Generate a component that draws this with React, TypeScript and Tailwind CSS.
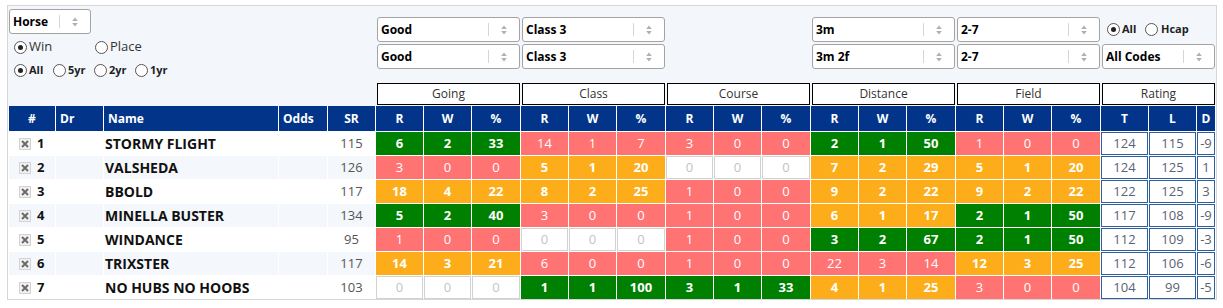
import React from "react";

type Tone = "g" | "r" | "o" | "z";
type Stat = [number, number, number, Tone];

type Runner = {
  no: number;
  name: string;
  sr: number;
  stats: Stat[];
  t: number;
  l: number;
  d: number;
};

const TONE: Record<Tone, string> = {
  g: "bg-[#008000] text-white font-bold",
  r: "bg-[#ff7373] text-white",
  o: "bg-[#fdad19] text-white font-bold",
  z: "bg-white text-[#c4c4c4] border border-[#d2d2d2]",
};

const RUNNERS: Runner[] = [
  {
    no: 1,
    name: "STORMY FLIGHT",
    sr: 115,
    stats: [
      [6, 2, 33, "g"],
      [14, 1, 7, "r"],
      [3, 0, 0, "r"],
      [2, 1, 50, "g"],
      [1, 0, 0, "r"],
    ],
    t: 124,
    l: 115,
    d: -9,
  },
  {
    no: 2,
    name: "VALSHEDA",
    sr: 126,
    stats: [
      [3, 0, 0, "r"],
      [5, 1, 20, "o"],
      [0, 0, 0, "z"],
      [7, 2, 29, "o"],
      [5, 1, 20, "o"],
    ],
    t: 124,
    l: 125,
    d: 1,
  },
  {
    no: 3,
    name: "BBOLD",
    sr: 117,
    stats: [
      [18, 4, 22, "o"],
      [8, 2, 25, "o"],
      [1, 0, 0, "r"],
      [9, 2, 22, "o"],
      [9, 2, 22, "o"],
    ],
    t: 122,
    l: 125,
    d: 3,
  },
  {
    no: 4,
    name: "MINELLA BUSTER",
    sr: 134,
    stats: [
      [5, 2, 40, "g"],
      [3, 0, 0, "r"],
      [1, 0, 0, "r"],
      [6, 1, 17, "o"],
      [2, 1, 50, "g"],
    ],
    t: 117,
    l: 108,
    d: -9,
  },
  {
    no: 5,
    name: "WINDANCE",
    sr: 95,
    stats: [
      [1, 0, 0, "r"],
      [0, 0, 0, "z"],
      [1, 0, 0, "r"],
      [3, 2, 67, "g"],
      [2, 1, 50, "g"],
    ],
    t: 112,
    l: 109,
    d: -3,
  },
  {
    no: 6,
    name: "TRIXSTER",
    sr: 117,
    stats: [
      [14, 3, 21, "o"],
      [6, 0, 0, "r"],
      [1, 0, 0, "r"],
      [22, 3, 14, "r"],
      [12, 3, 25, "o"],
    ],
    t: 112,
    l: 106,
    d: -6,
  },
  {
    no: 7,
    name: "NO HUBS NO HOOBS",
    sr: 103,
    stats: [
      [0, 0, 0, "z"],
      [1, 1, 100, "g"],
      [3, 1, 33, "g"],
      [4, 1, 25, "o"],
      [3, 0, 0, "r"],
    ],
    t: 104,
    l: 99,
    d: -5,
  },
];

const GROUPS = ["Going", "Class", "Course", "Distance", "Field"];

function Select({ value, className = "" }: { value: string; className?: string }) {
  return (
    <div
      className={`flex h-[25px] items-center rounded-[3px] border border-[#a3a3a3] bg-white pl-[3px] text-[12px] font-bold text-black ${className}`}
    >
      <span className="flex-1 truncate">{value}</span>
      <span className="h-[13px] w-px bg-[#d6d6d6]" />
      <svg className="mx-[12px]" width="6" height="10" viewBox="0 0 6 10">
        <path d="M3 0.5L5.8 4H0.2Z M3 9.5L5.8 6H0.2Z" fill="#b0b0b0" />
      </svg>
    </div>
  );
}

function Radio({ checked = false }: { checked?: boolean }) {
  return (
    <span className="flex h-[13px] w-[13px] shrink-0 items-center justify-center rounded-full border border-[#555] bg-white">
      {checked && <span className="h-[5px] w-[5px] rounded-full bg-[#222]" />}
    </span>
  );
}

function RemoveBox() {
  return (
    <span className="flex h-[12px] w-[12px] items-center justify-center border border-[#d3d3d3] bg-[#f1f1f1]">
      <svg width="8" height="8" viewBox="0 0 8 8">
        <path d="M1 1L7 7M7 1L1 7" stroke="#6b6b6b" strokeWidth="2" />
      </svg>
    </span>
  );
}

const head = "flex items-center bg-[#02358a] text-[12px] font-bold text-white";
const rating = "flex items-center justify-center border border-[#2d5e9e] bg-white text-[13px] text-[#5a6275]";

export default function App() {
  return (
    <div className="h-[308px] w-[1223px] bg-white pt-[5px] font-['Open_Sans','Liberation_Sans',sans-serif]">
      <div className="ml-[7px] h-[295px] w-[1210px] border border-[#d6d6d6] bg-[#f3f7fc]">
        {/* filters */}
        <div className="flex h-[77px]">
          <div className="w-[368px] pl-px pt-[3px]">
            <Select value="Horse" className="w-[82px]" />
            <div className="mt-[6px] flex h-[14px] items-center text-[13px] text-[#333]">
              <div className="ml-[5px] flex w-[81px] items-center gap-[2px]">
                <Radio checked />
                <span>Win</span>
              </div>
              <div className="flex items-center gap-[2px]">
                <Radio />
                <span>Place</span>
              </div>
            </div>
            <div className="mt-[9px] flex h-[14px] items-center text-[11px] font-bold text-[#222]">
              <div className="ml-[5px] flex w-[39px] items-center gap-[2px]">
                <Radio checked />
                <span>All</span>
              </div>
              <div className="flex w-[41px] items-center gap-[2px]">
                <Radio />
                <span>5yr</span>
              </div>
              <div className="flex w-[41px] items-center gap-[2px]">
                <Radio />
                <span>2yr</span>
              </div>
              <div className="flex items-center gap-[2px]">
                <Radio />
                <span>1yr</span>
              </div>
            </div>
          </div>

          <div className="flex w-[145px] flex-col gap-[2px] pt-[11px]">
            <Select value="Good" className="ml-px w-[143px]" />
            <Select value="Good" className="ml-px w-[143px]" />
          </div>
          <div className="flex w-[145px] flex-col gap-[2px] pt-[11px]">
            <Select value="Class 3" className="ml-px w-[143px]" />
            <Select value="Class 3" className="ml-px w-[143px]" />
          </div>
          <div className="w-[145px]" />
          <div className="flex w-[145px] flex-col gap-[2px] pt-[11px]">
            <Select value="3m" className="ml-px w-[143px]" />
            <Select value="3m 2f" className="ml-px w-[143px]" />
          </div>
          <div className="flex w-[145px] flex-col gap-[2px] pt-[11px]">
            <Select value="2-7" className="ml-px w-[143px]" />
            <Select value="2-7" className="ml-px w-[143px]" />
          </div>
          <div className="flex w-[114px] flex-col gap-[2px] pt-[11px]">
            <div className="flex h-[25px] items-center text-[11px] font-bold text-[#222]">
              <div className="ml-[6px] flex w-[38px] items-center gap-[2px]">
                <Radio checked />
                <span>All</span>
              </div>
              <div className="flex items-center gap-[3px]">
                <Radio />
                <span>Hcap</span>
              </div>
            </div>
            <Select value="All Codes" className="ml-px w-[113px]" />
          </div>
        </div>

        {/* group headers */}
        <div className="flex h-[23px] text-[12px] text-[#333]">
          <div className="w-[368px]" />
          {GROUPS.map((g) => (
            <div key={g} className="w-[145px]">
              <div className="mx-px flex h-[22px] items-center justify-center border border-black bg-white">
                {g}
              </div>
            </div>
          ))}
          <div className="w-[114px]">
            <div className="ml-px flex h-[22px] w-[113px] items-center justify-center border border-black bg-white">
              Rating
            </div>
          </div>
        </div>

        {/* table */}
        <div className="bg-white pl-px">
          <div className="grid grid-cols-[46px_47px_174px_48px_47px_repeat(5,47px_47px_48px)_47px_47px_18px] grid-rows-[25px_repeat(7,23px)] gap-px">
            <div className={`${head} justify-center`}>#</div>
            <div className={`${head} pl-[4px]`}>Dr</div>
            <div className={`${head} pl-[4px]`}>Name</div>
            <div className={`${head} pl-[4px]`}>Odds</div>
            <div className={`${head} justify-center`}>SR</div>
            {GROUPS.map((g) =>
              ["R", "W", "%"].map((h) => (
                <div key={g + h} className={`${head} justify-center`}>
                  {h}
                </div>
              ))
            )}
            <div className={`${head} justify-center`}>T</div>
            <div className={`${head} justify-center`}>L</div>
            <div className={`${head} justify-center`}>D</div>

            {RUNNERS.map((r, i) => {
              const stripe = i % 2 === 1 ? "bg-[#f4f7fb]" : "bg-white";
              return (
                <React.Fragment key={r.no}>
                  <div className={`flex items-center ${stripe}`}>
                    <span className="ml-[10px]">
                      <RemoveBox />
                    </span>
                    <span className="ml-[6px] text-[13px] font-bold text-[#111]">{r.no}</span>
                  </div>
                  <div className={stripe} />
                  <div className={`flex items-center pl-px text-[14px] font-bold text-[#111] ${stripe}`}>
                    {r.name}
                  </div>
                  <div className={stripe} />
                  <div className={`flex items-center justify-center text-[13px] text-[#555] ${stripe}`}>
                    {r.sr}
                  </div>
                  {r.stats.map((s, j) =>
                    [s[0], s[1], s[2]].map((v, k) => (
                      <div
                        key={`${j}-${k}`}
                        className={`flex items-center justify-center text-[13px] ${TONE[s[3]]}`}
                      >
                        {v}
                      </div>
                    ))
                  )}
                  <div className={rating}>{r.t}</div>
                  <div className={rating}>{r.l}</div>
                  <div className={rating}>{r.d}</div>
                </React.Fragment>
              );
            })}
          </div>
        </div>
      </div>
    </div>
  );
}
